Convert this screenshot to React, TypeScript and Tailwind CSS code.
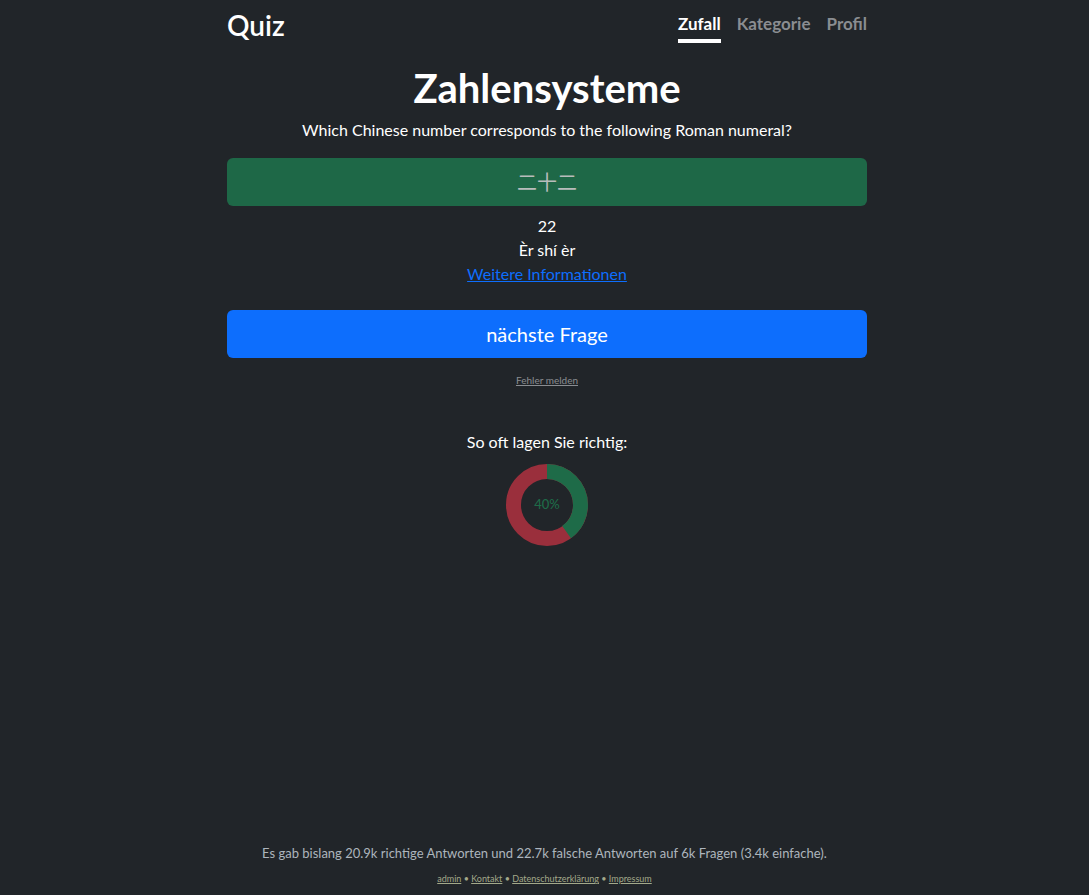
import React from "react";

const font = { fontFamily: "Lato, 'Noto Sans CJK SC', sans-serif" };

function Donut({ percent }: { percent: number }) {
    const r = 33.5;
    const c = 2 * Math.PI * r;
    return (
        <div className="relative w-[84px] h-[84px]">
            <svg width="84" height="84" viewBox="0 0 84 84" className="-rotate-90">
                <circle cx="42" cy="42" r={r} fill="none" stroke="#9a2f3c" strokeWidth="15" />
                <circle
                    cx="42"
                    cy="42"
                    r={r}
                    fill="none"
                    stroke="#1e6b48"
                    strokeWidth="15"
                    strokeDasharray={`${(c * percent) / 100} ${c}`}
                />
            </svg>
            <div className="absolute inset-0 flex items-center justify-center text-[13px] font-medium text-[#1e6b48]">
                {percent}%
            </div>
        </div>
    );
}

export default function App() {
    return (
        <div className="min-h-[895px] bg-[#212529] text-white flex flex-col" style={font}>
            <div className="w-[640px] ml-[227px] flex-1 flex flex-col">
                {/* Header */}
                <header className="flex items-start justify-between h-[60px]">
                    <div className="text-[28px] font-semibold leading-none pt-[11px]">Quiz</div>
                    <nav className="flex gap-4 pt-[15px] text-[17px] font-bold leading-none">
                        <div className="flex flex-col items-center">
                            <span>Zufall</span>
                            <span className="mt-[7px] h-[4px] w-full bg-white" />
                        </div>
                        <span className="text-[#8a8d91]">Kategorie</span>
                        <span className="text-[#8a8d91]">Profil</span>
                    </nav>
                </header>

                {/* Question */}
                <h1 className="text-center text-[40px] font-bold leading-[48px] mt-[4px]">Zahlensysteme</h1>
                <p className="text-center text-[16px] leading-6 mt-[6px]">
                    Which Chinese number corresponds to the following Roman numeral?
                </p>
                <div className="mt-[16px] h-[48px] rounded-md bg-[#1e6847] flex items-center justify-center text-[20px] text-[#b8bcbb]">
                    二十二
                </div>
                <div className="mt-[8px] text-center text-[16px] leading-6">
                    <div>22</div>
                    <div>Èr shí èr</div>
                    <a href="#" className="text-[#0d6efd] underline">Weitere Informationen</a>
                </div>
                <button className="mt-[24px] h-[48px] rounded-md bg-[#0d6efd] text-[20px] text-white">
                    nächste Frage
                </button>
                <div className="mt-[17px] text-center text-[10px] leading-none">
                    <a href="#" className="text-[#8a8d91] underline">Fehler melden</a>
                </div>

                {/* Stats */}
                <div className="mt-[45px] flex flex-col items-center">
                    <p className="text-[16px] leading-6">So oft lagen Sie richtig:</p>
                    <div className="mt-[9px]">
                        <Donut percent={40} />
                    </div>
                </div>
            </div>

            {/* Footer */}
            <footer className="pb-[12px] text-center">
                <p className="text-[13px] text-[#adb5bd] leading-5">
                    Es gab bislang 20.9k richtige Antworten und 22.7k falsche Antworten auf 6k Fragen (3.4k einfache).
                </p>
                <p className="mt-[11px] text-[9px] text-[#a3a98a] leading-none">
                    <a href="#" className="underline">admin</a> • <a href="#" className="underline">Kontakt</a> •{" "}
                    <a href="#" className="underline">Datenschutzerklärung</a> •{" "}
                    <a href="#" className="underline">Impressum</a>
                </p>
            </footer>
        </div>
    );
}
